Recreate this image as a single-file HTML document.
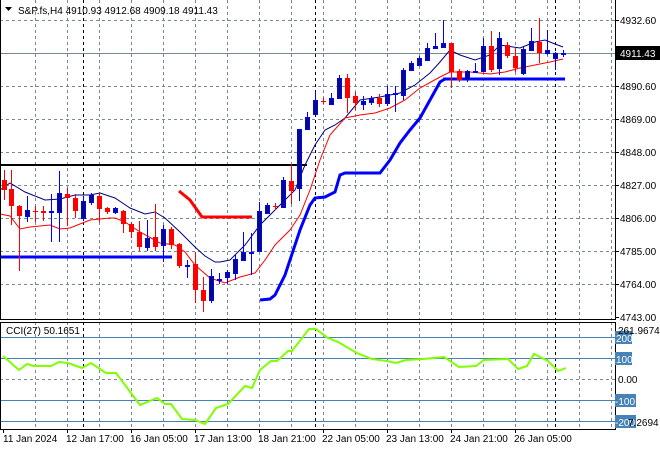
<!DOCTYPE html>
<html><head><meta charset="utf-8"><style>
html,body{margin:0;padding:0;background:#fff;}
svg{display:block;font-family:"Liberation Sans",sans-serif;font-size:10px;}
</style></head><body>
<svg width="660" height="450" viewBox="0 0 660 450" xmlns="http://www.w3.org/2000/svg">
<rect width="660" height="450" fill="#fff"/>
<!-- grid main -->
<g stroke="#778899" stroke-width="1" stroke-dasharray="3,3" fill="none">
<path d="M0 20.5H615M0 86.5H615M0 119.5H615M0 152.5H615M0 185.5H615M0 218.5H615M0 251.5H615M0 284.5H615"/>
<path d="M35.5 0V319M67.5 0V319M99.5 0V319M131.5 0V319M163.5 0V319M195.5 0V319M227.5 0V319M259.5 0V319M291.5 0V319M323.5 0V319M355.5 0V319M387.5 0V319M419.5 0V319M451.5 0V319M483.5 0V319M515.5 0V319M547.5 0V319M579.5 0V319M611.5 0V319"/>
<path d="M35.5 322V429M67.5 322V429M99.5 322V429M131.5 322V429M163.5 322V429M195.5 322V429M227.5 322V429M259.5 322V429M291.5 322V429M323.5 322V429M355.5 322V429M387.5 322V429M419.5 322V429M451.5 322V429M483.5 322V429M515.5 322V429M547.5 322V429M579.5 322V429M611.5 322V429"/>
<path d="M0 379.5H615"/>
</g>
<g stroke="#000" stroke-dasharray="3,3">
<path d="M83.5 0V319M315.5 0V319M555.5 0V319M83.5 322V429M315.5 322V429M555.5 322V429"/>
</g>
<path d="M0 53.5H615" stroke="#778899"/>
<!-- black level, blue level -->
<path d="M0 165H307" stroke="#000" stroke-width="2"/>
<path d="M0 257H172" stroke="#0000ff" stroke-width="3"/>
<path d="M443 79H565" stroke="#0000ff" stroke-width="3"/>
<path d="M179 191L190 200L202 217L252 217" stroke="#ff0000" stroke-width="3" fill="none"/>
<!-- MAs -->
<polyline fill="none" stroke="#000080" stroke-width="1" points="0,190 10,183 25,192 45,200 60,199 75,195 90,195 100,193 115,198 130,208 145,214 155,212 165,218 180,232 195,247 205,256 215,262 220,262 230,260 245,245 260,225 280,205 295,190 305,165 315,145 325,130 335,125 345,118 360,100 380,97 400,93 415,85 430,73 440,62 450,50 460,55 475,60 490,55 500,45 520,48 535,42 545,40 555,44 563,47"/>
<polyline fill="none" stroke="#ff0000" stroke-width="1" points="0,214 10,216 20,229 30,227 50,225 60,229 70,228 80,224 90,220 110,218 115,218 125,222 140,232 160,243 175,245 185,252 195,265 210,278 225,283 240,277 255,273 265,260 275,245 290,230 300,215 310,190 320,160 330,135 345,118 360,115 375,113 390,108 405,100 420,88 440,77 450,72 470,72 480,73 490,74 505,72 520,68 535,65 550,62 563,59"/>
<polyline fill="none" stroke="#0000ff" stroke-width="3" points="260,300 270,299 275,295 285,275 290,260 300,230 310,205 315,198 325,197 335,192 340,175 345,173 380,173 390,160 400,143 410,130 420,118 430,100 440,82 445,79"/>
<!-- wicks -->
<path stroke="#ff0000" d="M4.5 170V200M11.5 170V225M19.5 205V271M35.5 206V222M43.5 206V221M67.5 188V226M75.5 194V218M99.5 193V222M107.5 207V214M123.5 210V233M131.5 222V238M139.5 221V251M155.5 204V251M171.5 227V249M179.5 243V268M195.5 252V303M203.5 277V312M275.5 203V210M291.5 164V204M323.5 98V104M347.5 74V113M355.5 92V110M379.5 94V107M451.5 43V88M459.5 69V82M491.5 31V72M507.5 42V58M515.5 48V72M539.5 18V63"/>
<path stroke="#0000ff" d="M27.5 196V222M51.5 194V242M59.5 171V242M83.5 196V221M91.5 193V205M115.5 207V214M147.5 220V251M163.5 225V262M187.5 260V278M211.5 269V303M219.5 273V284M227.5 270V284M235.5 255V280M243.5 232V260M251.5 233V275M259.5 202V251M267.5 203V214M283.5 177V207M299.5 129V201M307.5 112V129M315.5 92V115M331.5 93V104M339.5 75V98M363.5 96V110M371.5 96V105M387.5 86V106M395.5 86V112M403.5 68V100M411.5 61V71M419.5 56V66M427.5 43V60M435.5 33V48M443.5 20V48M467.5 70V82M475.5 63V73M483.5 38V71M499.5 32V75M523.5 47V75M531.5 28V50M547.5 30V55M555.5 52V70M563.5 50V57"/>
<!-- bodies -->
<g fill="#ff0000">
<rect x="2" y="180" width="5" height="10"/><rect x="9" y="189" width="5" height="17"/><rect x="17" y="206" width="5" height="10"/><rect x="33" y="211" width="5" height="1"/><rect x="41" y="211" width="5" height="2"/><rect x="65" y="194" width="5" height="4"/><rect x="73" y="198" width="5" height="13"/><rect x="97" y="196" width="5" height="13"/><rect x="105" y="208" width="5" height="4"/><rect x="121" y="211" width="5" height="13"/><rect x="129" y="224" width="5" height="8"/><rect x="137" y="232" width="5" height="15"/><rect x="153" y="237" width="5" height="10"/><rect x="169" y="229" width="5" height="16"/><rect x="177" y="244" width="5" height="22"/><rect x="193" y="264" width="5" height="26"/><rect x="201" y="290" width="5" height="11"/><rect x="273" y="206" width="5" height="1"/><rect x="289" y="181" width="5" height="10"/><rect x="321" y="101" width="5" height="1"/><rect x="345" y="78" width="5" height="20"/><rect x="353" y="96" width="5" height="7"/><rect x="377" y="98" width="5" height="6"/><rect x="449" y="43" width="5" height="29"/><rect x="457" y="71" width="5" height="9"/><rect x="489" y="46" width="5" height="24"/><rect x="505" y="45" width="5" height="11"/><rect x="513" y="56" width="5" height="12"/><rect x="537" y="42" width="5" height="11"/>
</g>
<g fill="#0a0a80" stroke="#0000ff" stroke-width="1">
<rect x="25.5" y="210.5" width="4" height="6"/><rect x="49.5" y="211.5" width="4" height="1"/><rect x="57.5" y="193.5" width="4" height="19"/><rect x="81.5" y="201.5" width="4" height="17"/><rect x="89.5" y="195.5" width="4" height="7"/><rect x="113.5" y="208.5" width="4" height="4"/><rect x="145.5" y="238.5" width="4" height="9"/><rect x="161.5" y="229.5" width="4" height="16"/><rect x="185.5" y="265.5" width="4" height="1"/><rect x="209.5" y="276.5" width="4" height="24"/><rect x="217.5" y="279.5" width="4" height="1"/><rect x="225.5" y="272.5" width="4" height="5"/><rect x="233.5" y="259.5" width="4" height="14"/><rect x="241.5" y="252.5" width="4" height="8"/><rect x="249.5" y="252.5" width="4" height="1"/><rect x="257.5" y="211.5" width="4" height="40"/><rect x="265.5" y="205.5" width="4" height="8"/><rect x="281.5" y="180.5" width="4" height="27"/><rect x="297.5" y="129.5" width="4" height="59"/><rect x="305.5" y="117.5" width="4" height="12"/><rect x="313.5" y="100.5" width="4" height="14"/><rect x="329.5" y="98.5" width="4" height="6"/><rect x="337.5" y="78.5" width="4" height="20"/><rect x="361.5" y="101.5" width="4" height="3"/><rect x="369.5" y="98.5" width="4" height="4"/><rect x="385.5" y="94.5" width="4" height="9"/><rect x="393.5" y="93.5" width="4" height="1"/><rect x="401.5" y="70.5" width="4" height="25"/><rect x="409.5" y="63.5" width="4" height="7"/><rect x="417.5" y="58.5" width="4" height="7"/><rect x="425.5" y="48.5" width="4" height="12"/><rect x="433.5" y="46.5" width="4" height="2"/><rect x="441.5" y="43.5" width="4" height="4"/><rect x="465.5" y="71.5" width="4" height="8"/><rect x="473.5" y="71.5" width="4" height="1"/><rect x="481.5" y="46.5" width="4" height="25"/><rect x="497.5" y="38.5" width="4" height="30"/><rect x="521.5" y="49.5" width="4" height="24"/><rect x="529.5" y="41.5" width="4" height="9"/><rect x="545.5" y="50.5" width="4" height="3"/><rect x="553.5" y="53.5" width="4" height="5"/><rect x="561.5" y="53.5" width="4" height="1"/>
</g>
<!-- CCI levels -->
<path d="M0 337.5H615M0 358.5H615M0 400.5H615M0 421.5H615" stroke="#4682b4"/>
<polyline fill="none" stroke="#7fff00" stroke-width="2" points="3,356 19,370 27,364 34,366 51,366 59,362 68,363 82,368 91,363 106,373 116,373 140,405 157,398 165,404 171,404 182,419 195,420 205,424 216,408 228,404 245,386 252,388 260,370 271,361 277,361 288,351 292,351 309,329 316,329 328,338 338,342 357,353 372,359 387,361 396,363 406,360 423,359 444,357 459,367 476,366 484,360 508,359 518,369 527,366 534,354 548,361 558,371 566,368"/>
<!-- frames -->
<path d="M0.5 0V319.5H615.5V0M0.5 322.5H615.5V429.5H0.5Z" stroke="#000" fill="none"/>
<!-- header -->
<path d="M5 7H12L8.5 11Z" fill="#000"/>
<text x="18" y="14" fill="#000">S&amp;P.fs,H4  4910.93 4912.68 4909.18 4911.43</text>
<text x="6" y="334" fill="#000">CCI(27) 50.1651</text>
<!-- price axis -->
<g fill="#000">
<path d="M615 20.5H619M615 86.5H619M615 119.5H619M615 152.5H619M615 185.5H619M615 218.5H619M615 251.5H619M615 284.5H619M615 317.5H619" stroke="#000"/>
<text x="620" y="24">4932.60</text>
<text x="620" y="90">4890.60</text>
<text x="620" y="123">4869.00</text>
<text x="620" y="156">4848.00</text>
<text x="620" y="189">4827.00</text>
<text x="620" y="222">4806.00</text>
<text x="620" y="255">4785.00</text>
<text x="620" y="288">4764.00</text>
<text x="620" y="321">4743.00</text>
</g>
<rect x="615" y="46" width="45" height="14" fill="#000"/>
<text x="620" y="57" fill="#fff">4911.43</text>
<g fill="#4682b4">
<rect x="615" y="331" width="17" height="13"/><rect x="615" y="352" width="17" height="13"/><rect x="615" y="394" width="21" height="13"/><rect x="615" y="415" width="21" height="13"/>
</g>
<g fill="#fff"><text x="616" y="342">200</text><text x="616" y="363">100</text><text x="615" y="405">-100</text><text x="615" y="426">-200</text></g>
<g fill="#000"><text x="618" y="334">261.9674</text><text x="618" y="383">0.00</text><text x="628" y="426">7.2694</text></g>
<!-- time axis -->
<path d="M3.5 429V433M67.5 429V433M131.5 429V433M195.5 429V433M259.5 429V433M323.5 429V433M387.5 429V433M451.5 429V433M515.5 429V433" stroke="#000"/>
<g fill="#000">
<text x="3" y="442">11 Jan 2024</text>
<text x="66" y="442">12 Jan 17:00</text>
<text x="130" y="442">16 Jan 05:00</text>
<text x="194" y="442">17 Jan 13:00</text>
<text x="258" y="442">18 Jan 21:00</text>
<text x="322" y="442">22 Jan 05:00</text>
<text x="386" y="442">23 Jan 13:00</text>
<text x="450" y="442">24 Jan 21:00</text>
<text x="514" y="442">26 Jan 05:00</text>
</g>
</svg>
</body></html>
